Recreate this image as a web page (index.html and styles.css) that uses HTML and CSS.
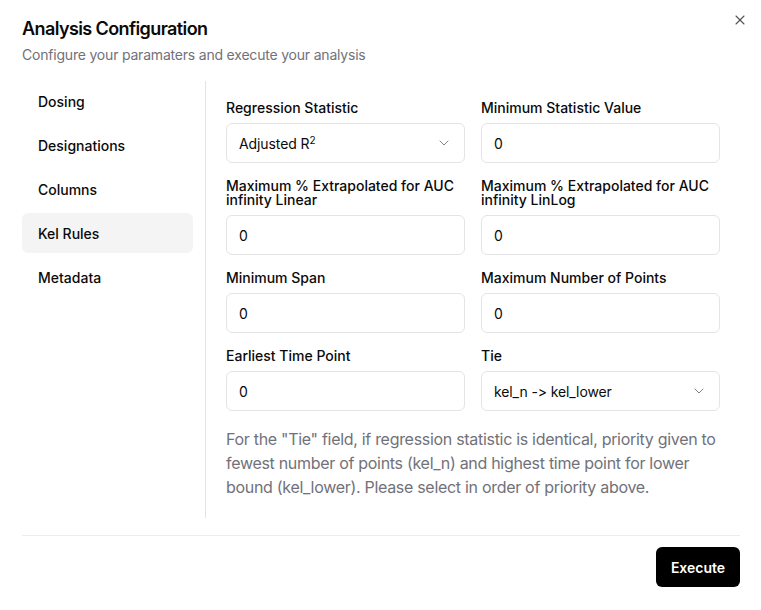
FILE: index.html
```html
<!DOCTYPE html>
<html lang="en">
<head>
<meta charset="utf-8">
<title>Analysis Configuration</title>
<link rel="stylesheet" href="styles.css">
</head>
<body>
<div class="dialog">
  <button class="close" aria-label="Close">
    <svg width="16" height="16" viewBox="0 0 24 24" fill="none" stroke="currentColor" stroke-width="1.6" stroke-linecap="round" stroke-linejoin="round"><path d="M18 6 6 18"/><path d="m6 6 12 12"/></svg>
  </button>
  <div class="header">
    <h2 class="title">Analysis Configuration</h2>
    <p class="subtitle">Configure your paramaters and execute your analysis</p>
  </div>
  <div class="main">
    <nav class="sidebar">
      <div class="nav-item">Dosing</div>
      <div class="nav-item">Designations</div>
      <div class="nav-item">Columns</div>
      <div class="nav-item active">Kel Rules</div>
      <div class="nav-item">Metadata</div>
    </nav>
    <div class="content">
      <div class="grid">
        <div class="field">
          <label class="label">Regression Statistic</label>
          <div class="input select"><span>Adjusted R<sup>2</sup></span>
            <svg class="chev" width="16" height="16" viewBox="0 0 24 24" fill="none" stroke="currentColor" stroke-width="1.5" stroke-linecap="round" stroke-linejoin="round"><path d="m6 9 6 6 6-6"/></svg>
          </div>
        </div>
        <div class="field">
          <label class="label">Minimum Statistic Value</label>
          <div class="input">0</div>
        </div>
        <div class="field">
          <label class="label">Maximum % Extrapolated for AUC infinity Linear</label>
          <div class="input">0</div>
        </div>
        <div class="field">
          <label class="label">Maximum % Extrapolated for AUC infinity LinLog</label>
          <div class="input">0</div>
        </div>
        <div class="field">
          <label class="label">Minimum Span</label>
          <div class="input">0</div>
        </div>
        <div class="field">
          <label class="label">Maximum Number of Points</label>
          <div class="input">0</div>
        </div>
        <div class="field">
          <label class="label">Earliest Time Point</label>
          <div class="input">0</div>
        </div>
        <div class="field">
          <label class="label">Tie</label>
          <div class="input select"><span>kel_n -&gt; kel_lower</span>
            <svg class="chev" width="16" height="16" viewBox="0 0 24 24" fill="none" stroke="currentColor" stroke-width="1.5" stroke-linecap="round" stroke-linejoin="round"><path d="m6 9 6 6 6-6"/></svg>
          </div>
        </div>
      </div>
      <p class="help">For the "Tie" field, if regression statistic is identical, priority given to fewest number of points (kel_n) and highest time point for lower bound (kel_lower). Please select in order of priority above.</p>
    </div>
  </div>
  <div class="footer">
    <button class="execute">Execute</button>
  </div>
</div>
</body>
</html>
```

FILE: styles.css
```css
* { box-sizing: border-box; }
html, body {
  margin: 0;
  padding: 0;
  background: #ffffff;
}
body {
  font-family: Inter, "Noto Sans", "Liberation Sans", sans-serif;
  font-feature-settings: "calt" 0;
  color: #0a0a0a;
  width: 761px;
  height: 610px;
}
.dialog {
  position: relative;
  padding: 20px 21px 0 22px;
  display: flex;
  flex-direction: column;
}
.close {
  position: absolute;
  top: 12px;
  right: 13px;
  width: 16px;
  height: 16px;
  padding: 0;
  border: 0;
  background: none;
  color: #0a0a0a;
  opacity: 0.7;
  display: flex;
}
.header {
  display: flex;
  flex-direction: column;
  gap: 7px;
}
.title {
  margin: 0;
  font-size: 18px;
  line-height: 18px;
  font-weight: 600;
  letter-spacing: -0.6px;
}
.subtitle {
  margin: 0;
  font-size: 14px;
  line-height: 20px;
  color: #71717a;
  letter-spacing: -0.2px;
}
.main {
  display: flex;
  margin-top: 16px;
}
.sidebar {
  width: 171px;
  flex: none;
  display: flex;
  flex-direction: column;
  gap: 4px;
}
.nav-item {
  height: 40px;
  display: flex;
  align-items: center;
  padding: 0 16px;
  font-size: 14px;
  font-weight: 500;
  border-radius: 6px;
}
.nav-item.active {
  background: #f4f4f5;
}
.content {
  flex: 1;
  margin-left: 12px;
  border-left: 1px solid #e4e4e7;
  padding: 20px 20px 19px 20px;
}
.grid {
  display: grid;
  grid-template-columns: 1fr 1fr;
  column-gap: 16px;
  row-gap: 16px;
}
.field {
  display: flex;
  flex-direction: column;
  gap: 8px;
  justify-content: flex-end;
}
.label {
  font-size: 14px;
  line-height: 14px;
  font-weight: 500;
}
.input {
  height: 40px;
  border: 1px solid #e4e4e7;
  border-radius: 6px;
  padding: 0 12px;
  display: flex;
  align-items: center;
  font-size: 14px;
  letter-spacing: -0.1px;
}
.select {
  justify-content: space-between;
}
.select sup {
  font-size: 10px;
  line-height: 0;
  vertical-align: 5px;
}
.chev {
  opacity: 0.5;
  color: #0a0a0a;
}
.help {
  margin: 16px 0 0;
  font-size: 16px;
  line-height: 24px;
  color: #71717a;
  letter-spacing: -0.3px;
}
.footer {
  margin-top: 17px;
  border-top: 1px solid #ececee;
  padding-top: 11px;
  display: flex;
  justify-content: flex-end;
}
.execute {
  height: 40px;
  width: 84px;
  padding: 0;
  border: 0;
  border-radius: 6px;
  background: #000000;
  color: #ffffff;
  font-family: inherit;
  font-size: 14px;
  font-weight: 600;
}
```
